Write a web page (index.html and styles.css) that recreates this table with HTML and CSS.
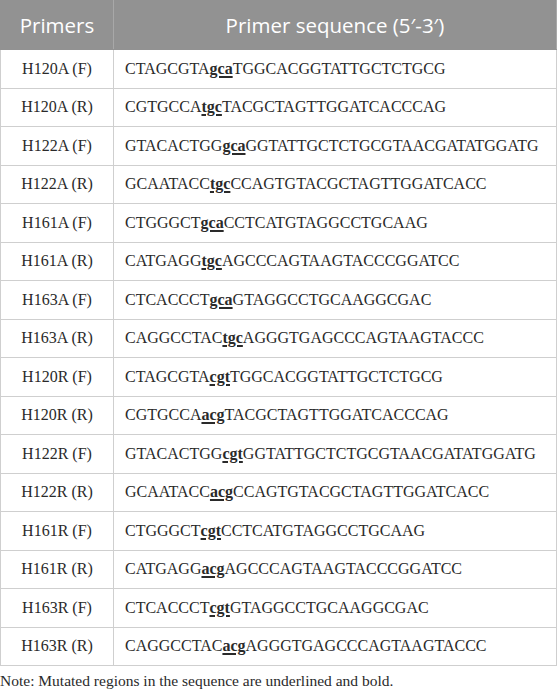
FILE: index.html
```html
<!DOCTYPE html>
<html>
<head>
<meta charset="utf-8">
<link rel="stylesheet" href="styles.css">
</head>
<body>
<table class="primers">
<thead>
<tr><th class="c1">Primers</th><th class="c2">Primer sequence (5′-3′)</th></tr>
</thead>
<tbody>
<tr><td class="name">H120A (F)</td><td class="seq">CTAGCGTA<b>gca</b>TGGCACGGTATTGCTCTGCG</td></tr>
<tr><td class="name">H120A (R)</td><td class="seq">CGTGCCA<b>tgc</b>TACGCTAGTTGGATCACCCAG</td></tr>
<tr><td class="name">H122A (F)</td><td class="seq">GTACACTGG<b>gca</b>GGTATTGCTCTGCGTAACGATATGGATG</td></tr>
<tr><td class="name">H122A (R)</td><td class="seq">GCAATACC<b>tgc</b>CCAGTGTACGCTAGTTGGATCACC</td></tr>
<tr><td class="name">H161A (F)</td><td class="seq">CTGGGCT<b>gca</b>CCTCATGTAGGCCTGCAAG</td></tr>
<tr><td class="name">H161A (R)</td><td class="seq">CATGAGG<b>tgc</b>AGCCCAGTAAGTACCCGGATCC</td></tr>
<tr><td class="name">H163A (F)</td><td class="seq">CTCACCCT<b>gca</b>GTAGGCCTGCAAGGCGAC</td></tr>
<tr><td class="name">H163A (R)</td><td class="seq">CAGGCCTAC<b>tgc</b>AGGGTGAGCCCAGTAAGTACCC</td></tr>
<tr><td class="name">H120R (F)</td><td class="seq">CTAGCGTA<b>cgt</b>TGGCACGGTATTGCTCTGCG</td></tr>
<tr><td class="name">H120R (R)</td><td class="seq">CGTGCCA<b>acg</b>TACGCTAGTTGGATCACCCAG</td></tr>
<tr><td class="name">H122R (F)</td><td class="seq">GTACACTGG<b>cgt</b>GGTATTGCTCTGCGTAACGATATGGATG</td></tr>
<tr><td class="name">H122R (R)</td><td class="seq">GCAATACC<b>acg</b>CCAGTGTACGCTAGTTGGATCACC</td></tr>
<tr><td class="name">H161R (F)</td><td class="seq">CTGGGCT<b>cgt</b>CCTCATGTAGGCCTGCAAG</td></tr>
<tr><td class="name">H161R (R)</td><td class="seq">CATGAGG<b>acg</b>AGCCCAGTAAGTACCCGGATCC</td></tr>
<tr><td class="name">H163R (F)</td><td class="seq">CTCACCCT<b>cgt</b>GTAGGCCTGCAAGGCGAC</td></tr>
<tr><td class="name">H163R (R)</td><td class="seq">CAGGCCTAC<b>acg</b>AGGGTGAGCCCAGTAAGTACCC</td></tr>
</tbody>
</table>
<p class="note">Note: Mutated regions in the sequence are underlined and bold.</p>
</body>
</html>
```

FILE: styles.css
```css
html, body {
  margin: 0;
  padding: 0;
  background: #ffffff;
}
.primers {
  border-collapse: collapse;
  width: 557px;
  table-layout: fixed;
}
.primers th {
  background: #929292;
  color: #ffffff;
  font-family: "Open Sans", "Noto Sans", sans-serif;
  font-weight: 400;
  font-size: 20.5px;
  height: 48px;
  padding: 0;
  text-align: center;
  border: 1px solid #929292;
  border-right-color: #a8a8a8;
}
.primers th.c1 { width: 112px; }
.primers td {
  font-family: "Liberation Serif", "DejaVu Serif", serif;
  font-size: 16px;
  color: #2a2a2a;
  height: 37.5px;
  padding: 0;
  border: 1px solid #cfcfcf;
}
.primers td.name {
  text-align: center;
}
.primers td.seq {
  text-align: left;
  padding-left: 11px;
}
.primers td b {
  text-decoration: underline;
  text-decoration-thickness: 1.5px;
  text-underline-offset: 2px;
}
.note {
  margin: 6px 0 0 0;
  font-family: "Liberation Serif", "DejaVu Serif", serif;
  font-size: 15.5px;
  color: #2a2a2a;
}
```
